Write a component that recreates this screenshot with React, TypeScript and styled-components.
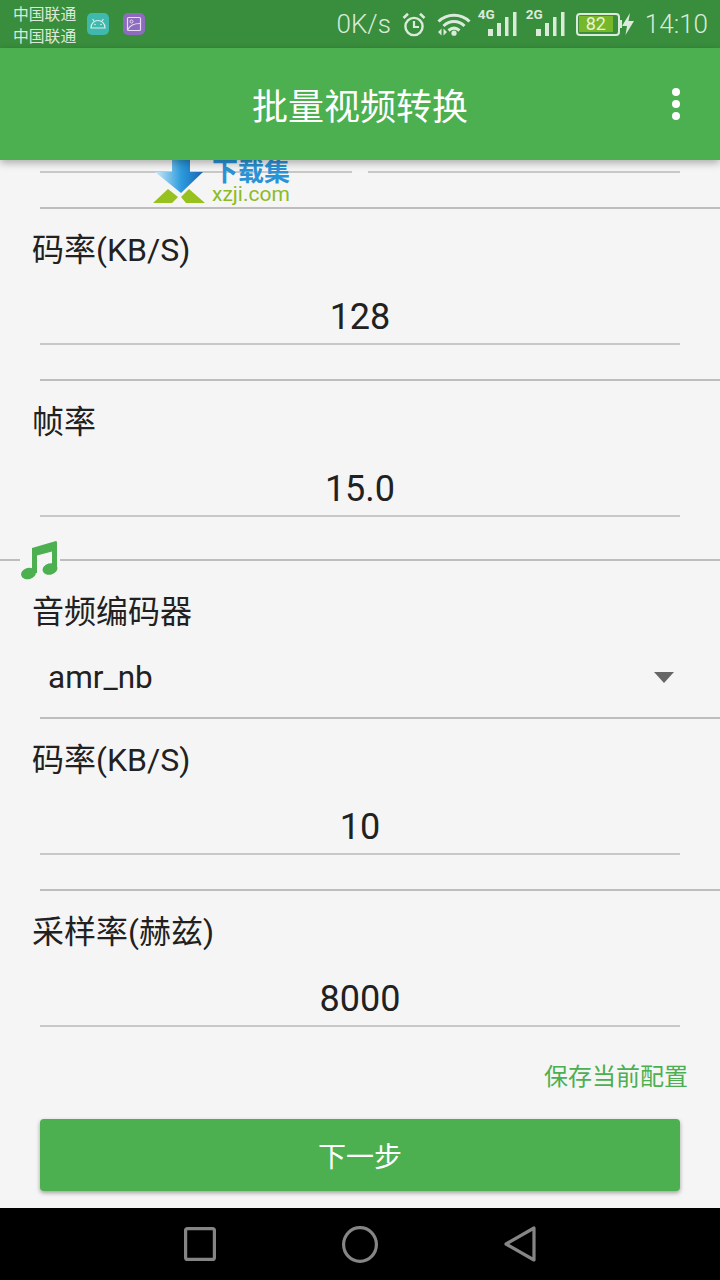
import styled, { createGlobalStyle } from "styled-components";

const GlobalStyle = createGlobalStyle`
	html, body {
		margin: 0;
		padding: 0;
		background: #f5f5f5;
	}
	* {
		box-sizing: border-box;
	}
`;

function AndroidGlyph() {
	return (
		<svg width="22" height="22" viewBox="0 0 22 22">
			<rect width="22" height="22" rx="5" fill="#3fb8ad" />
			<path d="M4 15 C4 10 7.5 7.5 11 7.5 S18 10 18 15 Z" fill="none" stroke="#d8f1ee" strokeWidth="1.2" />
			<path d="M7 8 L5.6 6 M15 8 L16.4 6" stroke="#d8f1ee" strokeWidth="1.1" />
			<circle cx="8" cy="11.5" r="0.8" fill="#d8f1ee" />
			<circle cx="14" cy="11.5" r="0.8" fill="#d8f1ee" />
		</svg>
	);
}

function GalleryGlyph() {
	return (
		<svg width="22" height="22" viewBox="0 0 22 22">
			<rect width="22" height="22" rx="5" fill="#8e6bbf" />
			<rect x="4.5" y="4.5" width="13" height="13" rx="1" fill="none" stroke="#e4dcf2" strokeWidth="1.2" />
			<circle cx="8.5" cy="8.5" r="1.5" fill="none" stroke="#e4dcf2" strokeWidth="1" />
			<path d="M5 16.5 C7 12 11 10.5 17 10.5" fill="none" stroke="#e4dcf2" strokeWidth="1.1" />
		</svg>
	);
}

function AlarmGlyph() {
	return (
		<svg width="24" height="25" viewBox="0 0 24 25" fill="none" stroke="#dbeadb">
			<circle cx="12" cy="14.5" r="8.6" strokeWidth="2.4" />
			<path d="M12 9 V15 H17" strokeWidth="2.2" />
			<path d="M1.5 6 L6 1.8 M22.5 6 L18 1.8" strokeWidth="2.6" />
		</svg>
	);
}

function WifiGlyph() {
	return (
		<svg width="34" height="24" viewBox="0 0 34 24" fill="none" stroke="#dbeadb" strokeWidth="3">
			<path d="M1.5 9.5 C10 1 24 1 32.5 9.5" />
			<path d="M6.5 14 C12.5 8 21.5 8 27.5 14" />
			<path d="M11.5 18.5 C15 15.5 19 15.5 22.5 18.5" />
			<circle cx="17" cy="21.2" r="2.6" fill="#dbeadb" stroke="none" />
			<path d="M1 20 L4.5 16.5 V23.5 Z M6.5 16.5 V23.5 L10 20 Z" fill="#dbeadb" stroke="none" />
		</svg>
	);
}

function SignalBars() {
	return (
		<svg width="29" height="24" viewBox="0 0 29 24" fill="#dbeadb">
			<rect x="0" y="17" width="5" height="7" />
			<rect x="9" y="11" width="4" height="13" />
			<rect x="17" y="5" width="3.5" height="19" />
			<rect x="25" y="0" width="3.5" height="24" />
		</svg>
	);
}

function BoltGlyph() {
	return (
		<svg width="12" height="22" viewBox="0 0 12 22" fill="#dbeadb">
			<path d="M8 0 L0 13 H5 L3.5 22 L12 8 H6.5 Z" />
		</svg>
	);
}

function MusicGlyph() {
	return (
		<svg width="38" height="42" viewBox="0 0 38 42" fill="#4caf50">
			<path d="M12 9 L36 2 Q37 2 37 4 V30 H32 V12.5 L17 16.5 V34 H12 Z" />
			<ellipse cx="8.5" cy="34.5" rx="7.5" ry="5.6" transform="rotate(-15 8.5 34.5)" />
			<ellipse cx="30" cy="30" rx="7.5" ry="5.6" transform="rotate(-15 30 30)" />
		</svg>
	);
}

function WatermarkMark() {
	return (
		<svg width="54" height="44" viewBox="0 0 54 44">
			<defs>
				<linearGradient id="arrowFill" x1="0" y1="0" x2="1" y2="0">
					<stop offset="0" stopColor="#cfeaf7" />
					<stop offset="0.55" stopColor="#2b9bdc" />
					<stop offset="1" stopColor="#1c62b4" />
				</linearGradient>
			</defs>
			<path d="M2 12 H19 V0 H37 V12 H50 L28 33 Z" fill="url(#arrowFill)" />
			<path d="M0 43 L15 29 L25 37 L19 43 Z M28 37 L36 29 L52 43 L33 43 Z" fill="#97c11f" />
		</svg>
	);
}

function NavSquare() {
	return (
		<svg width="32" height="34" viewBox="0 0 32 34" fill="none" stroke="#858585" strokeWidth="3.2">
			<rect x="1.6" y="1.6" width="28.8" height="30.8" rx="2" />
		</svg>
	);
}

function NavCircle() {
	return (
		<svg width="36" height="37" viewBox="0 0 36 37" fill="none" stroke="#858585" strokeWidth="3.2">
			<ellipse cx="18" cy="18.5" rx="16.4" ry="16.9" />
		</svg>
	);
}

function NavBack() {
	return (
		<svg width="32" height="36" viewBox="0 0 32 36" fill="none" stroke="#858585" strokeWidth="3.2" strokeLinejoin="round">
			<path d="M30 2 V34 L2 18 Z" />
		</svg>
	);
}

export default function App() {
	return (
		<Page>
			<GlobalStyle />
			<StatusBar>
				<StatusLeft>
					<Carriers>
						<span>中国联通</span>
						<span>中国联通</span>
					</Carriers>
					<AndroidGlyph />
					<GalleryGlyph />
				</StatusLeft>
				<StatusRight>
					<Speed>0K/s</Speed>
					<AlarmGlyph />
					<WifiSlot>
						<WifiGlyph />
					</WifiSlot>
					<Signal>
						<NetworkTag>4G</NetworkTag>
						<SignalBars />
					</Signal>
					<Signal>
						<NetworkTag>2G</NetworkTag>
						<SignalBars />
					</Signal>
					<BatteryRow>
						<Battery>
							<BatteryLevel>82</BatteryLevel>
						</Battery>
						<BatteryCap />
						<BoltGlyph />
					</BatteryRow>
					<Clock>14:10</Clock>
				</StatusRight>
			</StatusBar>

			<AppBar>
				<Title>批量视频转换</Title>
				<MoreButton type="button">
					<Dot />
					<Dot />
					<Dot />
				</MoreButton>
			</AppBar>

			<Content>
				<Watermark>
					<WatermarkMark />
					<WatermarkText>
						<WatermarkName>下载集</WatermarkName>
						<WatermarkSite>xzji.com</WatermarkSite>
					</WatermarkText>
				</Watermark>

				<HalfInputs>
					<HalfInput />
					<HalfInput />
				</HalfInputs>
				<Divider $top={34} />

				<Field label="码率(KB/S)" value="128" />
				<Divider $top={34} />

				<Field label="帧率" value="15.0" />

				<SectionRule>
					<SectionIcon>
						<MusicGlyph />
					</SectionIcon>
				</SectionRule>

				<FieldLabel $top={31}>音频编码器</FieldLabel>
				<Select>
					<span>amr_nb</span>
					<Caret />
				</Select>
				<Divider $top={0} />

				<Field label="码率(KB/S)" value="10" />
				<Divider $top={34} />

				<Field label="采样率(赫兹)" value="8000" />

				<SaveLink>保存当前配置</SaveLink>
				<NextButton type="button">下一步</NextButton>
			</Content>

			<NavBar>
				<NavSquare />
				<NavCircle />
				<NavBack />
			</NavBar>
		</Page>
	);
}

function Field({ label, value }: { label: string; value: string }) {
	return (
		<>
			<FieldLabel $top={21}>{label}</FieldLabel>
			<ValueInput>{value}</ValueInput>
		</>
	);
}

const Page = styled.div`
	display: flex;
	flex-direction: column;
	width: 720px;
	height: 1280px;
	overflow: hidden;
	background: #f5f5f5;
	font-family: Roboto, "Noto Sans CJK SC", sans-serif;
`;

const StatusBar = styled.div`
	display: flex;
	align-items: center;
	justify-content: space-between;
	flex: none;
	height: 48px;
	padding: 0 12px 0 13px;
	background: #388e3c;
	color: #dbeadb;
`;

const StatusLeft = styled.div`
	display: flex;
	align-items: center;
	gap: 14px;
`;

const Carriers = styled.div`
	display: flex;
	flex-direction: column;
	width: 60px;
	margin-top: 4px;
	font-size: 15.8px;
	line-height: 22px;
	white-space: nowrap;
`;

const StatusRight = styled.div`
	display: flex;
	align-items: center;
	gap: 11px;
`;

const Speed = styled.span`
	font-size: 26px;
	font-weight: 300;
`;

const WifiSlot = styled.div`
	display: flex;
	margin-right: -2px;
`;

const Signal = styled.div`
	position: relative;
	display: flex;
	padding-left: 8px;
`;

const NetworkTag = styled.span`
	position: absolute;
	left: -2px;
	top: -4px;
	font-size: 13.5px;
	font-weight: 700;
	line-height: 12px;
`;

const BatteryRow = styled.div`
	display: flex;
	align-items: center;
`;

const Battery = styled.div`
	display: flex;
	width: 44px;
	height: 23px;
	padding: 1px 5px 2px 1px;
	border: 2px solid #dbeadb;
	border-radius: 4px;
`;

const BatteryLevel = styled.div`
	display: flex;
	align-items: center;
	justify-content: center;
	flex: 1;
	background: #76b82a;
	color: #e8f3d8;
	font-size: 18px;
	line-height: 14px;
`;

const BatteryCap = styled.div`
	width: 2px;
	height: 8px;
	background: #dbeadb;
`;

const Clock = styled.span`
	font-size: 26px;
	font-weight: 300;
`;

const AppBar = styled.header`
	position: relative;
	z-index: 2;
	display: flex;
	align-items: center;
	justify-content: center;
	flex: none;
	height: 112px;
	background: #4caf50;
	box-shadow: 0 3px 8px rgba(0, 0, 0, 0.3);
`;

const Title = styled.h1`
	margin: 0;
	color: #fff;
	font-size: 36px;
	font-weight: 400;
`;

const MoreButton = styled.button`
	position: absolute;
	right: 40px;
	top: 40px;
	display: flex;
	flex-direction: column;
	gap: 4px;
	padding: 0;
	border: none;
	background: none;
`;

const Dot = styled.span`
	width: 8px;
	height: 8px;
	border-radius: 50%;
	background: #fff;
`;

const Content = styled.main`
	position: relative;
	display: flex;
	flex-direction: column;
	flex: 1;
	min-height: 0;
`;

const Watermark = styled.div`
	position: absolute;
	left: 153px;
	top: 0;
	display: flex;
	gap: 5px;
`;

const WatermarkText = styled.div`
	display: flex;
	flex-direction: column;
`;

const WatermarkName = styled.span`
	color: #2a93d5;
	font-size: 26px;
	font-weight: 700;
	line-height: 24px;
`;

const WatermarkSite = styled.span`
	color: #8dbb23;
	font-size: 21px;
	line-height: 20px;
`;

const HalfInputs = styled.div`
	display: flex;
	gap: 16px;
	height: 13px;
	margin: 0 40px;
`;

const HalfInput = styled.div`
	flex: 1;
	border-bottom: 2px solid #c8c8c8;
`;

const Divider = styled.div<{ $top: number }>`
	height: 2px;
	margin: ${(p) => p.$top}px 0 0 40px;
	background: #bdbdbd;
`;

const FieldLabel = styled.label<{ $top: number }>`
	display: block;
	height: 40px;
	margin: ${(p) => p.$top}px 0 0 32px;
	color: #212121;
	font-size: 32px;
	line-height: 40px;
`;

const ValueInput = styled.div`
	height: 58px;
	margin: 17px 40px 0;
	border-bottom: 2px solid #c8c8c8;
	color: #212121;
	font-size: 36px;
	line-height: 60px;
	text-align: center;
`;

const SectionRule = styled.div`
	position: relative;
	flex: none;
	height: 2px;
	margin-top: 42px;
	background: #bdbdbd;
`;

const SectionIcon = styled.div`
	position: absolute;
	left: 20px;
	top: -20px;
	display: flex;
	width: 40px;
	height: 44px;
	background: #f5f5f5;
`;

const Select = styled.div`
	display: flex;
	align-items: center;
	justify-content: space-between;
	height: 85px;
	padding: 5px 46px 0 48px;
	color: #212121;
	font-size: 31.5px;
`;

const Caret = styled.span`
	width: 0;
	height: 0;
	border-left: 10px solid transparent;
	border-right: 10px solid transparent;
	border-top: 11px solid #666;
`;

const SaveLink = styled.div`
	align-self: flex-end;
	margin: 34px 32px 0 0;
	color: #4caf50;
	font-size: 24px;
	line-height: 32px;
`;

const NextButton = styled.button`
	flex: none;
	height: 72px;
	margin: 26px 40px 0;
	border: none;
	border-radius: 4px;
	background: #4caf50;
	box-shadow: 0 2px 4px rgba(0, 0, 0, 0.35);
	color: #fff;
	font-family: inherit;
	font-size: 28px;
`;

const NavBar = styled.nav`
	display: flex;
	align-items: center;
	justify-content: center;
	gap: 126px;
	flex: none;
	height: 72px;
	background: #000;
`;
